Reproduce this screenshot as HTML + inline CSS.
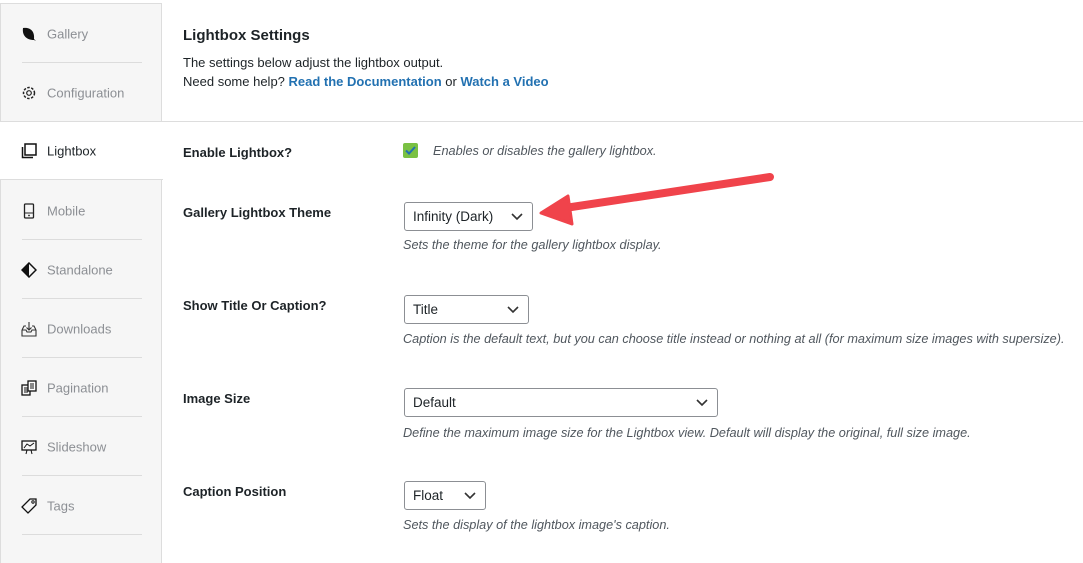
<!DOCTYPE html>
<html><head><style>
body{margin:0;width:1083px;height:548px;overflow:hidden;background:#fff;font-family:"Liberation Sans",sans-serif;position:relative;color:#1d2327}
.side{position:absolute;left:0;top:3px;width:162px;height:560px;background:#f6f6f6;border-right:1px solid #ddd;border-top:1px solid #ddd;border-left:1px solid #ddd;box-sizing:border-box}
.it{position:absolute;left:0;width:162px;height:59px;font-size:13px;color:#8c8f94}
.it span{position:absolute;left:47px;top:50%;transform:translateY(-50%)}
.it svg{position:absolute;left:21px;top:50%;transform:translateY(-50%)}
.sep{position:absolute;left:22px;width:120px;height:1px;background:#dcdcdc}
.act{background:#fff;color:#1d2327;width:163px;border-top:1px solid #ddd;border-bottom:1px solid #ddd;box-sizing:border-box}
.t{position:absolute;font-size:13px}
.lab{position:absolute;left:183px;font-size:13px;font-weight:bold}
.desc{position:absolute;left:403px;font-size:12.7px;font-style:italic;color:#50575e}
.sel{position:absolute;left:404px;height:29px;border:1px solid #8c8f94;border-radius:3px;box-sizing:border-box;font-size:13.5px;padding-left:8px;line-height:27px}
.sel svg{position:absolute;right:9px;top:10px}
a{color:#2271b1;text-decoration:none;font-weight:bold}
</style></head><body>
<div class="side"></div>
<div class="it" style="top:4px"><svg width="16" height="16" viewBox="0 0 16 16"><path d="M2 2 C8 1 14 4 13 13 L15 15 L13 14 C5 14 1 9 2 2Z" fill="#111"/></svg><span>Gallery</span></div>
<div class="sep" style="top:62px"></div>
<div class="it" style="top:63px"><svg width="16" height="16" viewBox="0 0 16 16"><circle cx="8" cy="8" r="5.5" fill="none" stroke="#222" stroke-width="1.5" stroke-dasharray="2.5 1.5"/><circle cx="8" cy="8" r="2.3" fill="none" stroke="#222" stroke-width="1.2"/></svg><span>Configuration</span></div>
<div class="it act" style="top:121px"><svg width="16" height="16" viewBox="0 0 16 16"><rect x="4" y="1" width="11" height="11" fill="none" stroke="#111" stroke-width="1.5"/><path d="M1.5 4 V14.5 H12" fill="none" stroke="#111" stroke-width="1.5"/></svg><span>Lightbox</span></div>
<div class="it" style="top:181px"><svg width="16" height="16" viewBox="0 0 16 16"><rect x="3.5" y="1" width="9" height="14" rx="1" fill="none" stroke="#222" stroke-width="1.3"/><line x1="3.5" y1="10" x2="12.5" y2="10" stroke="#222"/><circle cx="8" cy="12.5" r="0.9" fill="#222"/></svg><span>Mobile</span></div>
<div class="sep" style="top:239px"></div>
<div class="it" style="top:240px"><svg width="16" height="16" viewBox="0 0 16 16"><path d="M8 1 L15 8 L8 15 L1 8Z" fill="none" stroke="#111" stroke-width="1.5"/><path d="M8 1 L8 15 L1 8Z" fill="#111"/></svg><span>Standalone</span></div>
<div class="sep" style="top:298px"></div>
<div class="it" style="top:299px"><svg width="16" height="16" viewBox="0 0 16 16"><path d="M1 9 V15 H15 V9 M1 9 L3 5 H5 M11 5 H13 L15 9 M1 9 H5 L6 11 H10 L11 9 H15 M8 1 V9 M5.5 6.5 L8 9 L10.5 6.5" fill="none" stroke="#333" stroke-width="1.1"/></svg><span>Downloads</span></div>
<div class="sep" style="top:357px"></div>
<div class="it" style="top:358px"><svg width="16" height="16" viewBox="0 0 16 16"><rect x="1" y="5" width="8" height="10" fill="none" stroke="#111" stroke-width="1.3"/><rect x="7" y="1" width="8" height="10" fill="#fff" stroke="#111" stroke-width="1.3"/><path d="M3 8H7M3 10H7M3 12H7M9 4H13M9 6H13M9 8H13" stroke="#111"/></svg><span>Pagination</span></div>
<div class="sep" style="top:416px"></div>
<div class="it" style="top:417px"><svg width="16" height="16" viewBox="0 0 16 16"><rect x="1" y="2" width="14" height="9" fill="none" stroke="#111" stroke-width="1.3"/><path d="M3 9 L6 5 L9 7 L13 4 M6 11 L5 15 M10 11 L11 15" fill="none" stroke="#111"/></svg><span>Slideshow</span></div>
<div class="sep" style="top:475px"></div>
<div class="it" style="top:476px"><svg width="16" height="16" viewBox="0 0 16 16"><path d="M9 1 H15 V7 L7 15 L1 9Z" fill="none" stroke="#111" stroke-width="1.3"/><circle cx="12" cy="4" r="1.2" fill="none" stroke="#111"/></svg><span>Tags</span></div>
<div class="sep" style="top:534px"></div>

<div class="t" style="left:183px;top:27px;font-size:15px;font-weight:bold">Lightbox Settings</div>
<div class="t" style="left:183px;top:55px">The settings below adjust the lightbox output.</div>
<div class="t" style="left:183px;top:74px">Need some help? <a>Read the Documentation</a> or <a>Watch a Video</a></div>
<div style="position:absolute;left:163px;top:121px;width:920px;height:1px;background:#ddd"></div>

<div class="lab" style="top:145px">Enable Lightbox?</div>
<div style="position:absolute;left:403px;top:143px;width:15px;height:15px;background:#7ac143;border-radius:2px"><svg width="15" height="15" viewBox="0 0 15 15"><path d="M3 7.5 L6 10.5 L12 4" fill="none" stroke="#2271b1" stroke-width="2"/></svg></div>
<div class="desc" style="top:144px;left:433px">Enables or disables the gallery lightbox.</div>

<div class="lab" style="top:205px">Gallery Lightbox Theme</div>
<div class="sel" style="top:202px;width:129px">Infinity (Dark)<svg width="12" height="8" viewBox="0 0 12 8"><path d="M1 1 L6 6 L11 1" fill="none" stroke="#333" stroke-width="1.6"/></svg></div>
<div class="desc" style="top:238px">Sets the theme for the gallery lightbox display.</div>

<div class="lab" style="top:298px">Show Title Or Caption?</div>
<div class="sel" style="top:295px;width:125px">Title<svg width="12" height="8" viewBox="0 0 12 8"><path d="M1 1 L6 6 L11 1" fill="none" stroke="#333" stroke-width="1.6"/></svg></div>
<div class="desc" style="top:332px">Caption is the default text, but you can choose title instead or nothing at all (for maximum size images with supersize).</div>

<div class="lab" style="top:391px">Image Size</div>
<div class="sel" style="top:388px;width:314px">Default<svg width="12" height="8" viewBox="0 0 12 8"><path d="M1 1 L6 6 L11 1" fill="none" stroke="#333" stroke-width="1.6"/></svg></div>
<div class="desc" style="top:426px">Define the maximum image size for the Lightbox view. Default will display the original, full size image.</div>

<div class="lab" style="top:484px">Caption Position</div>
<div class="sel" style="top:481px;width:82px">Float<svg width="12" height="8" viewBox="0 0 12 8"><path d="M1 1 L6 6 L11 1" fill="none" stroke="#333" stroke-width="1.6"/></svg></div>
<div class="desc" style="top:518px">Sets the display of the lightbox image's caption.</div>

<svg style="position:absolute;left:0;top:0" width="1083" height="548"><g fill="#f0434b" stroke="#f0434b" stroke-linecap="round" stroke-linejoin="round"><line x1="770" y1="177" x2="565" y2="208" stroke-width="8"/><path d="M541 213 L568 196 L572 224Z" stroke-width="3"/></g></svg>
</body></html>
